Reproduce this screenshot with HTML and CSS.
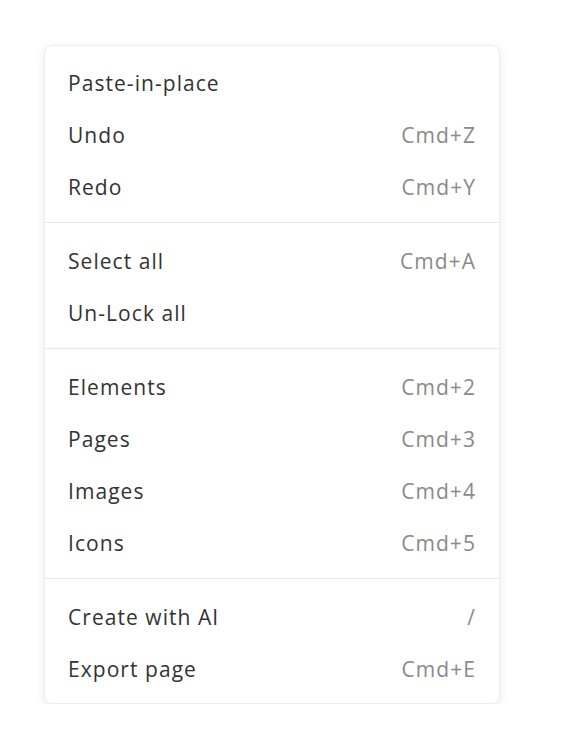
FILE: index.html
```html
<!DOCTYPE html>
<html lang="en">
<head>
<meta charset="utf-8">
<title>Context menu</title>
<link rel="stylesheet" href="styles.css">
</head>
<body>
<div class="menu">
  <div class="section">
    <div class="item"><span class="label">Paste-in-place</span></div>
    <div class="item"><span class="label">Undo</span><span class="key">Cmd+Z</span></div>
    <div class="item"><span class="label">Redo</span><span class="key">Cmd+Y</span></div>
  </div>
  <div class="section">
    <div class="item"><span class="label">Select all</span><span class="key">Cmd+A</span></div>
    <div class="item"><span class="label">Un-Lock all</span></div>
  </div>
  <div class="section">
    <div class="item"><span class="label">Elements</span><span class="key">Cmd+2</span></div>
    <div class="item"><span class="label">Pages</span><span class="key">Cmd+3</span></div>
    <div class="item"><span class="label">Images</span><span class="key">Cmd+4</span></div>
    <div class="item"><span class="label">Icons</span><span class="key">Cmd+5</span></div>
  </div>
  <div class="section last">
    <div class="item"><span class="label">Create with AI</span><span class="key">/</span></div>
    <div class="item"><span class="label">Export page</span><span class="key">Cmd+E</span></div>
  </div>
</div>
</body>
</html>
```

FILE: styles.css
```css
html, body {
  margin: 0;
  padding: 0;
  background: #ffffff;
}

body {
  padding: 45px 0 0 44px;
  font-family: "Open Sans", "Noto Sans", sans-serif;
}

.menu {
  width: 456px;
  box-sizing: border-box;
  background: #ffffff;
  border: 1px solid #ececec;
  border-radius: 8px;
  box-shadow: 0 3px 12px rgba(0, 0, 0, 0.08);
}

.section {
  padding: 10px 0;
}

.section + .section {
  border-top: 1px solid #e8e8e8;
  padding-top: 11px;
}

.section.last {
  padding-bottom: 9px;
}

.item {
  height: 52px;
  box-sizing: border-box;
  display: flex;
  align-items: center;
  justify-content: space-between;
  padding: 2px 24px 0 23px;
}

.label,
.key {
  font-size: 21px;
  letter-spacing: 1.05px;
}

.label {
  color: #333333;
}

.key {
  color: #8a8a8a;
  margin-right: -1px;
}
```
